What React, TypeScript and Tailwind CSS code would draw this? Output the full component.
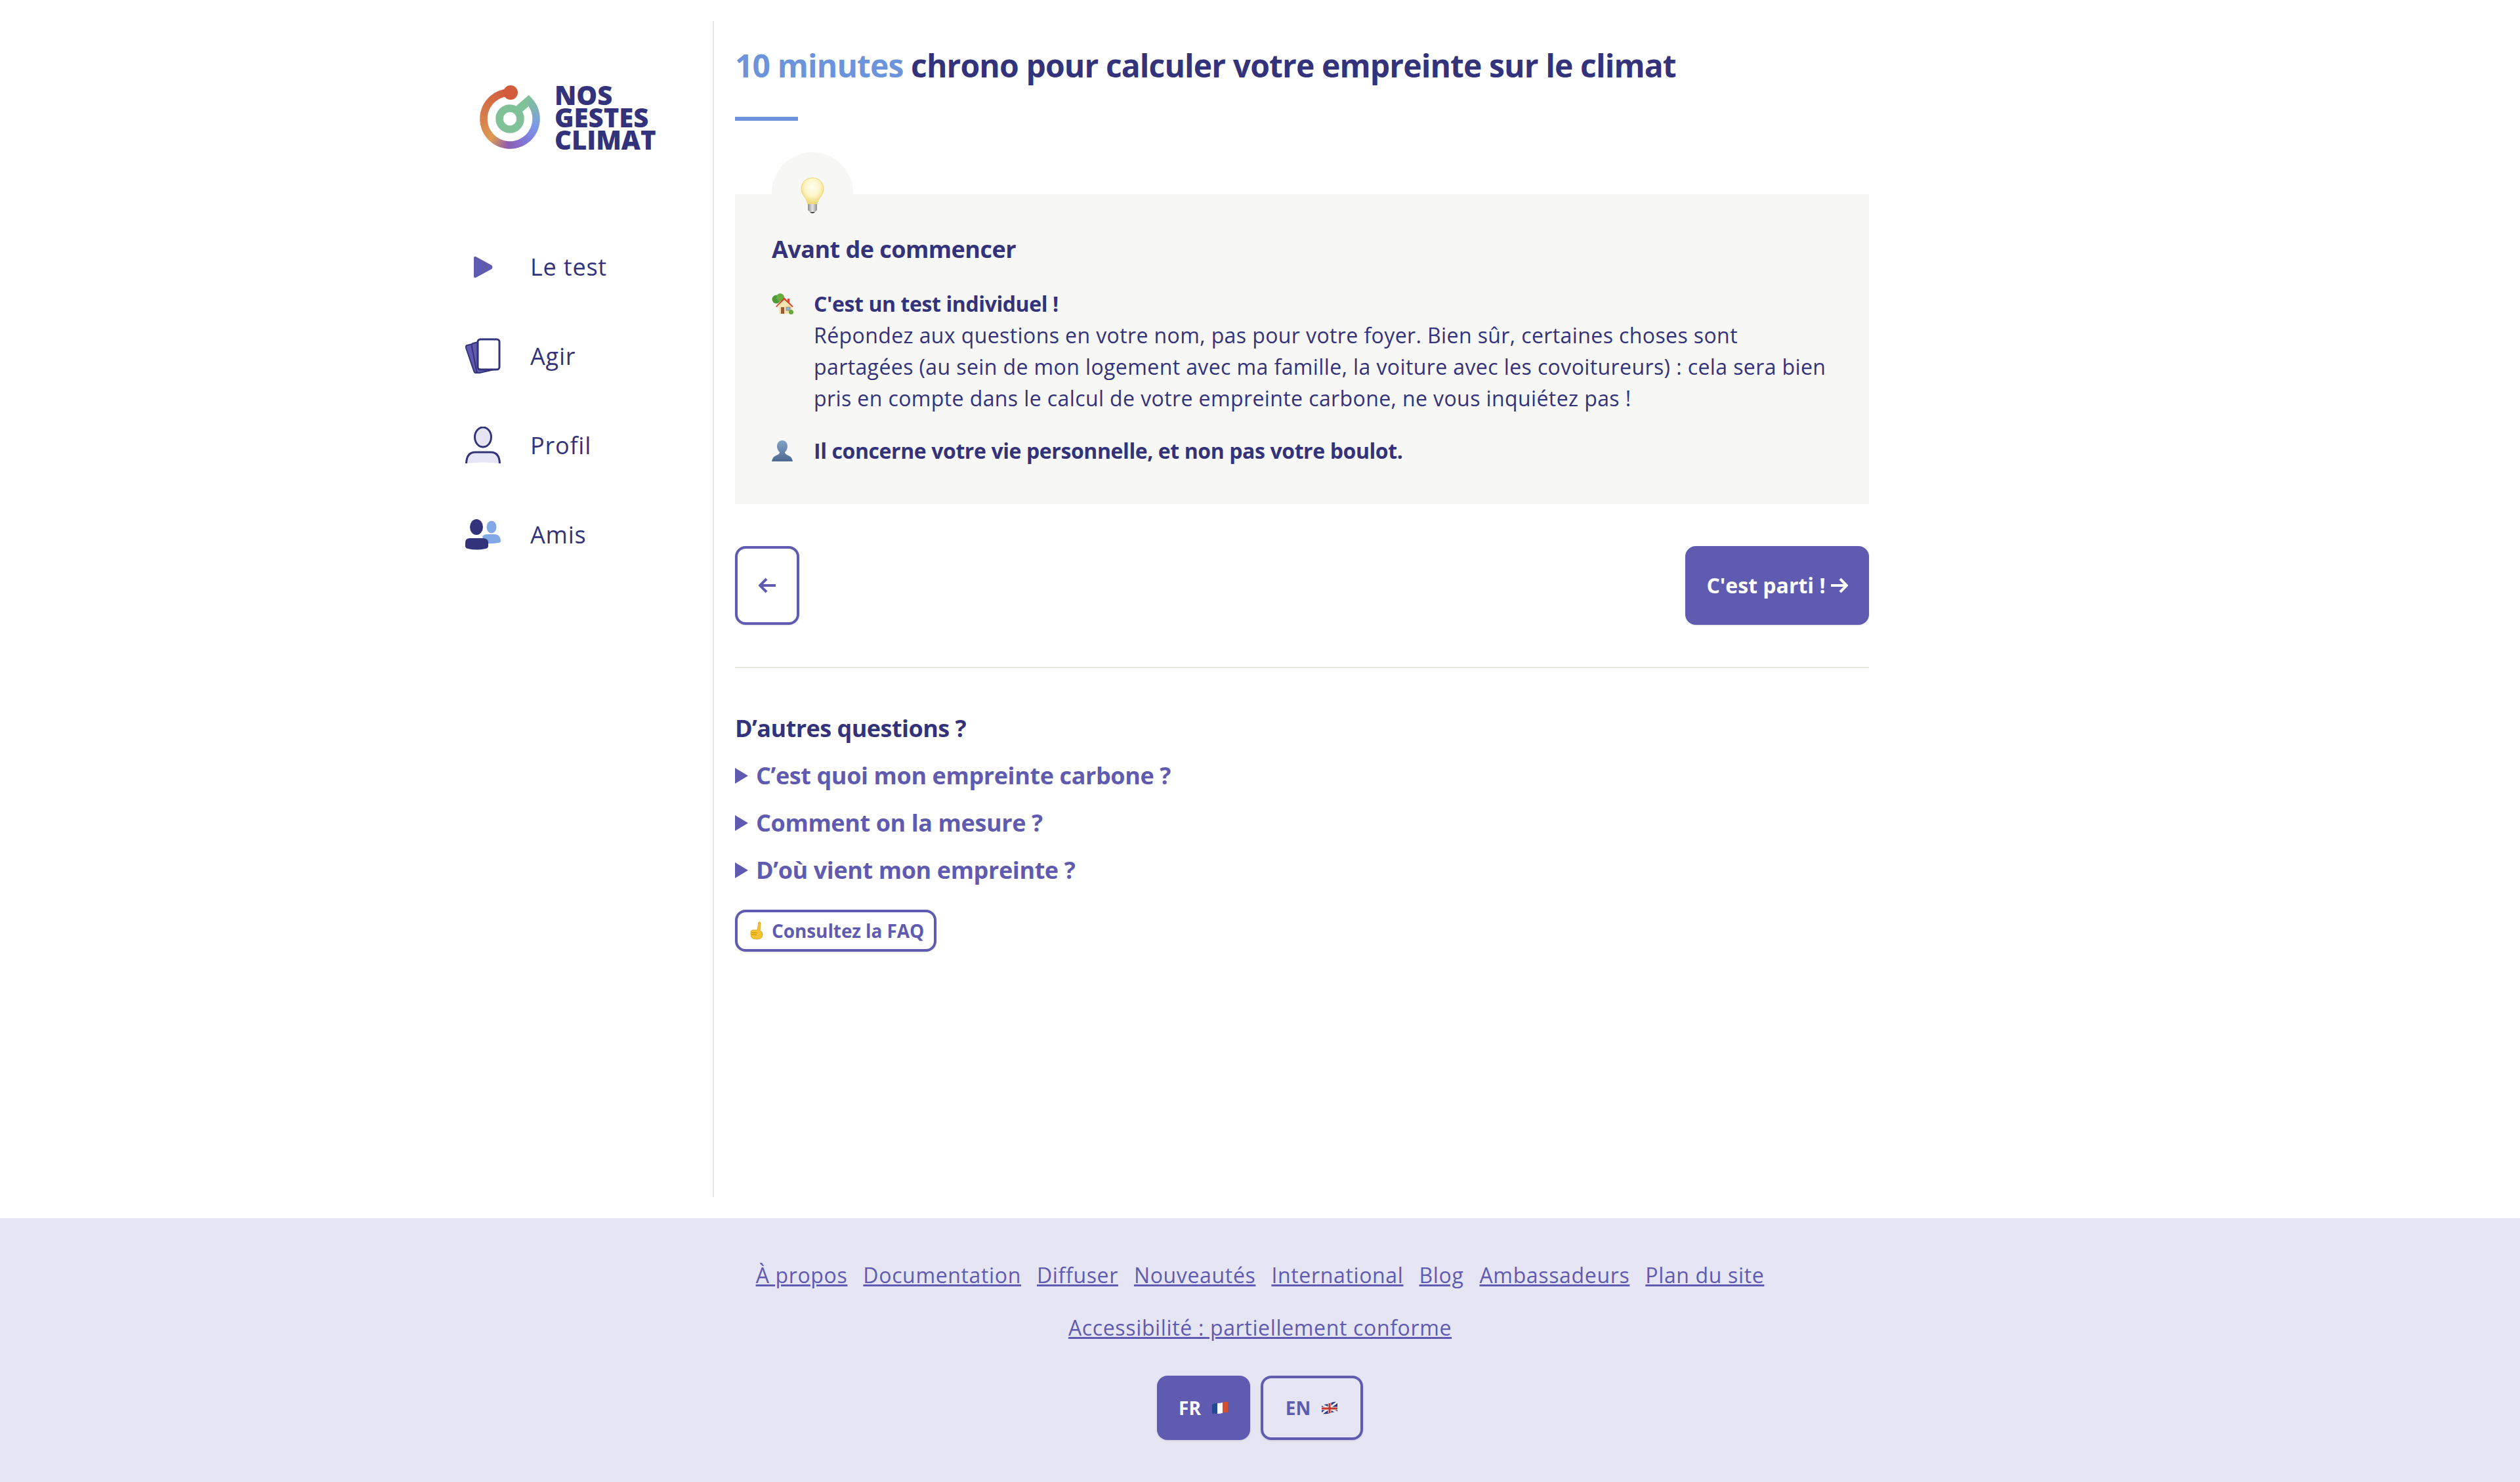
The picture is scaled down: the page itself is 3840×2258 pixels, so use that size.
import React from "react";

const stops: [number, number[]][] = [
  [0, [209, 91, 58]],
  [0.22, [212, 118, 72]],
  [0.42, [221, 154, 82]],
  [0.54, [142, 91, 176]],
  [0.68, [127, 122, 220]],
  [0.8, [125, 155, 232]],
  [0.92, [125, 180, 175]],
  [1, [128, 193, 151]],
];
function colorAt(t: number) {
  for (let i = 0; i < stops.length - 1; i++) {
    const [a, ca] = stops[i];
    const [b, cb] = stops[i + 1];
    if (t <= b) {
      const k = (t - a) / (b - a);
      return `rgb(${ca.map((c, j) => Math.round(c + (cb[j] - c) * k)).join(",")})`;
    }
  }
  return "rgb(128,193,151)";
}

function LogoIcon() {
  const cx = 46, cy = 51, r = 40;
  const start = -92, sweep = -316;
  const n = 70;
  const segs = Array.from({ length: n }, (_, i) => {
    const a0 = ((start + (sweep * i) / n) * Math.PI) / 180;
    const a1 = ((start + (sweep * (i + 1.15)) / n) * Math.PI) / 180;
    return {
      d: `M${cx + r * Math.cos(a0)} ${cy + r * Math.sin(a0)}A${r} ${r} 0 0 0 ${cx + r * Math.cos(a1)} ${cy + r * Math.sin(a1)}`,
      c: colorAt(i / n),
    };
  });
  return (
    <svg width="94" height="100" viewBox="0 0 94 100" className="shrink-0">
      {segs.map((s, i) => (
        <path key={i} d={s.d} fill="none" stroke={s.c} strokeWidth="11.5" />
      ))}
      <circle cx="47" cy="11" r="11" fill="#d15b3a" />
      <circle cx={cx} cy={cy} r="16" fill="none" stroke="#80c197" strokeWidth="11.5" />
      <path d="M56 31 L74.7 15 L78 18.5 L71 27 L74.5 32 L64 41 Z" fill="#80c197" />
    </svg>
  );
}

function PlayIcon() {
  return (
    <svg width="32" height="34" viewBox="0 0 32 34">
      <path d="M2 3 Q2 0 5 1 L29 14 Q32 17 29 20 L5 33 Q2 34 2 31 Z" fill="#5f5bb0" />
    </svg>
  );
}
function CardsIcon() {
  return (
    <svg width="54" height="56" viewBox="0 0 54 56">
      <path d="M3 11 L16 8 L28 50 L18 53 Q14 54 13 50 L1 15 Q0 12 3 11 Z" fill="#5f5bb0" stroke="#32337b" strokeWidth="2" />
      <path d="M12 8 L20 6 L44 48 L22 53 Q18 54 17 50 L10 13 Q9 9 12 8 Z" fill="#5f5bb0" stroke="#32337b" strokeWidth="2" />
      <rect x="19" y="2" width="33" height="46" rx="4" fill="#fff" stroke="#32337b" strokeWidth="3" />
    </svg>
  );
}
function ProfileIcon() {
  return (
    <svg width="56" height="58" viewBox="0 0 56 58">
      <ellipse cx="28" cy="16" rx="12.5" ry="15" fill="#e6e5f4" stroke="#32337b" strokeWidth="3" />
      <path d="M2 56 C2 44 7 39 16 39 H40 C49 39 54 44 54 56 Q28 53 2 56 Z" fill="#e6e5f4" />
      <path d="M2.5 56 C3 44 8 39 16 39 H40 C48 39 53 44 53.5 56" fill="none" stroke="#32337b" strokeWidth="3" />
    </svg>
  );
}
function FriendsIcon() {
  return (
    <svg width="56" height="48" viewBox="0 0 56 48">
      <ellipse cx="41" cy="12" rx="7.5" ry="9.5" fill="#82a9e6" />
      <path d="M27 26 Q30 23 35 23 H46 Q54 23 55 33 Q55 36 52 36 Q40 38 30 37 Z" fill="#82a9e6" />
      <ellipse cx="18" cy="12" rx="10" ry="12" fill="#32337b" />
      <path d="M1 36 Q1 29 8 29 H28 Q36 29 36 36 V41 Q36 44 32 45 Q18 48 5 45 Q1 44 1 41 Z" fill="#32337b" />
    </svg>
  );
}

function Bulb() {
  return (
    <svg width="36" height="58" viewBox="0 0 36 58">
      <defs>
        <radialGradient id="bulbg" cx="50%" cy="36%" r="60%">
          <stop offset="0%" stopColor="#fffef4" />
          <stop offset="55%" stopColor="#fdf6c8" />
          <stop offset="100%" stopColor="#f0d978" />
        </radialGradient>
        <linearGradient id="bulbb" x1="0" x2="1" y1="0" y2="0">
          <stop offset="0%" stopColor="#8d8d8d" />
          <stop offset="50%" stopColor="#e6e6e6" />
          <stop offset="100%" stopColor="#8d8d8d" />
        </linearGradient>
      </defs>
      <path d="M18 1 C8 1 1 8 1 18 C1 27 9 31 11 41 H25 C27 31 35 27 35 18 C35 8 28 1 18 1 Z" fill="url(#bulbg)" stroke="#eed677" strokeWidth="1" />
      <path d="M11 41 H25 V50 Q22 54 18 54 Q14 54 11 50 Z" fill="url(#bulbb)" />
      <path d="M14 53 Q18 57 22 53 Z" fill="#333" />
    </svg>
  );
}
function HouseTree() {
  return (
    <svg width="34" height="32" viewBox="0 0 34 32" className="shrink-0">
      <circle cx="7" cy="9" r="6.5" fill="#4f9a34" />
      <circle cx="13" cy="6" r="6" fill="#6aaf3d" />
      <rect x="11" y="17" width="20" height="14" fill="#f3e3b0" />
      <path d="M6 20 L19 6 L24 11 L24 8 L27 8 L27 14 L33 20 L31 21 L19 10 L8 21 Z" fill="#d8492f" />
      <path d="M19 10 L30 20 H8 Z" fill="#f3e3b0" />
      <rect x="14" y="21" width="5" height="10" fill="#9a5a34" />
      <rect x="22" y="21" width="6" height="5" fill="#7fbbe4" stroke="#a8773f" strokeWidth="0.8" />
      <circle cx="29.5" cy="28.5" r="3.5" fill="#63a93c" />
    </svg>
  );
}
function Bust() {
  return (
    <svg width="32" height="32" viewBox="0 0 32 32" className="shrink-0">
      <defs>
        <linearGradient id="bustg" x1="0" x2="0" y1="0" y2="1">
          <stop offset="0%" stopColor="#84a3c8" />
          <stop offset="100%" stopColor="#4d6890" />
        </linearGradient>
      </defs>
      <path d="M16 0 C21 0 24 4 24 9 C24 13 22 16 20 18 C20 21 24 22 27 24 C30 25 31 28 32 32 H0 C1 28 2 25 5 24 C8 22 12 21 12 18 C10 16 8 13 8 9 C8 4 11 0 16 0 Z" fill="url(#bustg)" />
    </svg>
  );
}
function Finger() {
  return (
    <svg width="22" height="28" viewBox="0 0 22 28" className="shrink-0">
      <path d="M14 1 Q17 0 17 3 L16 14 Q20 15 20 20 Q20 27 11 27 Q2 27 2 20 L2 15 Q4 12 8 13 L12 13 Z" fill="#f4c430" stroke="#d79c1c" strokeWidth="0.8" />
      <path d="M3 17 H12 M3 20 H11" stroke="#c98c10" strokeWidth="1" fill="none" />
    </svg>
  );
}
function FlagFR() {
  return (
    <svg width="26" height="20" viewBox="0 0 26 20">
      <path d="M1 5 Q4 3 9 3 V19 Q4 18 1 19 Z" fill="#234b93" />
      <path d="M9 3 Q13 3 17 2 V18 Q13 19 9 19 Z" fill="#fff" />
      <path d="M17 2 Q21 0 25 1 V17 Q21 16 17 18 Z" fill="#d44f2d" />
    </svg>
  );
}
function FlagEN() {
  return (
    <svg width="26" height="20" viewBox="0 0 26 20">
      <path d="M1 5 Q9 5 14 3 Q20 0 25 1 V17 Q20 15 14 18 Q8 20 1 19 Z" fill="#27357f" />
      <path d="M1 5 L25 17 M25 1 L1 19" stroke="#f2e7e7" strokeWidth="3" />
      <path d="M13 3 V18 M1 11 H25" stroke="#f2e7e7" strokeWidth="5" />
      <path d="M13 3 V18 M1 11 H25" stroke="#c4392d" strokeWidth="3" />
    </svg>
  );
}

function NavItem({ icon, label }: { icon: React.ReactNode; label: string }) {
  return (
    <div className="flex h-[136px] items-center">
      <div className="flex w-[60px] shrink-0 justify-center">{icon}</div>
      <span className="ml-[42px] text-[36px] tracking-[0.8px] text-[#32337b]">{label}</span>
    </div>
  );
}

function Question({ label }: { label: string }) {
  return (
    <div className="flex h-[72px] items-center text-[36px] font-bold tracking-[-0.4px] text-[#5f5bb0]">
      <svg width="20" height="24" viewBox="0 0 20 24" className="mr-[12px] shrink-0">
        <path d="M0 0 L20 12 L0 24 Z" fill="#5f5bb0" />
      </svg>
      {label}
    </div>
  );
}

export default function App() {
  const links = ["À propos", "Documentation", "Diffuser", "Nouveautés", "International", "Blog", "Ambassadeurs", "Plan du site"];
  return (
    <div className="flex min-h-[2258px] flex-col bg-white [font-family:'Open_Sans',sans-serif]">
      <div className="flex h-[1856px] pt-[32px]">
        <aside className="ml-[640px] h-[1792px] w-[448px] shrink-0 border-r-[2px] border-[#e6e6e0] pl-[66px]">
          <div className="mt-[98px] ml-[25px] flex items-center gap-[20px]">
            <LogoIcon />
            <div className="-mt-[3px] text-[40px] leading-[34px] font-extrabold text-[#32337b]">
              NOS<br />GESTES<br />CLIMAT
            </div>
          </div>
          <nav className="mt-[109px]">
            <NavItem icon={<PlayIcon />} label="Le test" />
            <NavItem icon={<CardsIcon />} label="Agir" />
            <NavItem icon={<ProfileIcon />} label="Profil" />
            <NavItem icon={<FriendsIcon />} label="Amis" />
          </nav>
        </aside>
        <main className="ml-[32px] w-[1728px] shrink-0">
          <h1 className="mt-[40px] text-[48px] leading-[56px] font-bold tracking-[-0.88px] text-[#32337b]">
            <span className="text-[#6c94dc]">10 minutes</span> chrono pour calculer votre empreinte sur le climat
          </h1>
          <div className="mt-[50px] h-[6px] w-[96px] bg-[#6c94dc]" />
          <section className="relative mt-[112px] h-[472px] bg-[#f7f7f5] pt-[60px] pl-[56px] text-[#32337b]">
            <div className="absolute top-[-64px] left-[56px] flex h-[124px] w-[124px] justify-center rounded-full bg-[#f7f7f5] pt-[38px]">
              <Bulb />
            </div>
            <h2 className="relative text-[36px] leading-[48px] font-bold tracking-[-0.54px]">Avant de commencer</h2>
            <div className="relative mt-[35px] flex">
              <div className="w-[64px] shrink-0 pt-[8px]"><HouseTree /></div>
              <div className="w-[1600px] text-[32px] leading-[48px] tracking-[0.4px]">
                <strong className="font-bold tracking-[-0.41px]">C'est un test individuel !</strong><br />
                Répondez aux questions en votre nom, pas pour votre foyer. Bien sûr, certaines choses sont<br />
                partagées (au sein de mon logement avec ma famille, la voiture avec les covoitureurs) : cela sera bien<br />
                pris en compte dans le calcul de votre empreinte carbone, ne vous inquiétez pas !
              </div>
            </div>
            <div className="relative mt-[32px] flex">
              <div className="w-[64px] shrink-0 pt-[8px]"><Bust /></div>
              <div className="text-[32px] leading-[48px] font-bold tracking-[-0.41px]">Il concerne votre vie personnelle, et non pas votre boulot.</div>
            </div>
          </section>
          <div className="mt-[64px] flex justify-between">
            <button className="flex h-[120px] w-[98px] items-center justify-center rounded-[16px] border-[4px] border-[#5f5bb0] shadow-sm">
              <svg width="26" height="24" viewBox="0 0 26 24" fill="none" stroke="#5f5bb0" strokeWidth="4"><path d="M26 12 H3 M12 2 L2 12 L12 22" /></svg>
            </button>
            <button className="flex h-[120px] w-[280px] items-center justify-center gap-[8px] rounded-[16px] bg-[#5f5bb0] text-[32px] font-bold text-white shadow-sm">
              C'est parti !
              <svg width="26" height="24" viewBox="0 0 26 24" fill="none" stroke="#fff" strokeWidth="4"><path d="M0 12 H23 M14 2 L24 12 L14 22" /></svg>
            </button>
          </div>
          <div className="mt-[64px] h-[2px] bg-[#e6e6e0]" />
          <h3 className="mt-[68px] text-[36px] leading-[48px] font-bold tracking-[-0.54px] text-[#32337b]">D’autres questions ?</h3>
          <div className="mt-[12px]">
            <Question label="C’est quoi mon empreinte carbone ?" />
            <Question label="Comment on la mesure ?" />
            <Question label="D’où vient mon empreinte ?" />
          </div>
          <button className="mt-[24px] flex h-[64px] w-[307px] items-center gap-[12px] rounded-[16px] border-[4px] border-[#5f5bb0] pl-[18px] text-[28px] font-bold tracking-[-0.1px] text-[#5f5bb0] shadow-sm">
            <Finger /> Consultez la FAQ
          </button>
        </main>
      </div>
      <footer className="flex h-[402px] flex-col items-center bg-[#e6e5f4] pt-[63px] text-[32px] tracking-[0.65px] text-[#5f5bb0]">
        <div className="flex h-[48px] items-center gap-[24px] underline">
          {links.map((l) => <span key={l}>{l}</span>)}
        </div>
        <div className="mt-[32px] h-[48px] leading-[48px] underline">Accessibilité : partiellement conforme</div>
        <div className="mt-[49px] flex gap-[16px] text-[28px] font-bold tracking-normal">
          <div className="flex h-[98px] w-[142px] items-center justify-center gap-[16px] rounded-[16px] bg-[#5f5bb0] text-white shadow-sm">FR <FlagFR /></div>
          <div className="flex h-[98px] w-[156px] items-center justify-center gap-[16px] rounded-[16px] border-[4px] border-[#5f5bb0] shadow-sm">EN <FlagEN /></div>
        </div>
      </footer>
    </div>
  );
}
